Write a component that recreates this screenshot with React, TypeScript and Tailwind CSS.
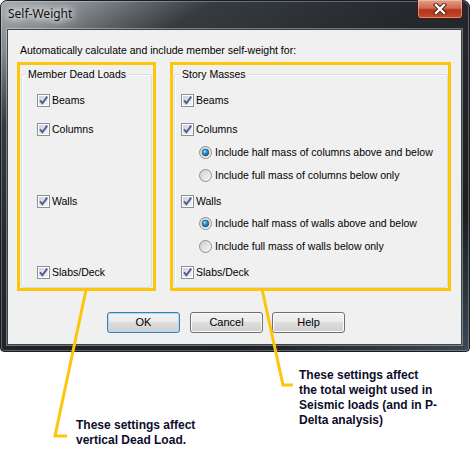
import React from "react";

function CheckBox() {
    return (
        <svg width="13" height="13" viewBox="0 0 13 13" className="shrink-0">
            <defs>
                <linearGradient id="cbFill" x1="0" y1="0" x2="1" y2="1">
                    <stop offset="0" stopColor="#cfd2d6" />
                    <stop offset="1" stopColor="#f5f5f5" />
                </linearGradient>
            </defs>
            <rect x="0.5" y="0.5" width="12" height="12" fill="#ffffff" stroke="#8e8f8f" />
            <rect x="2" y="2" width="9" height="9" fill="url(#cbFill)" />
            <path d="M3 6.3 L5.4 9.2 L10.2 2.6" fill="none" stroke="#4a5c9a" strokeWidth="1.9" />
        </svg>
    );
}

function Radio({ on }: { on?: boolean }) {
    return (
        <svg width="13" height="13" viewBox="0 0 13 13" className="shrink-0">
            <defs>
                <linearGradient id="rbFill" x1="0" y1="0" x2="1" y2="1">
                    <stop offset="0" stopColor="#cdcdcd" />
                    <stop offset="1" stopColor="#fafafa" />
                </linearGradient>
                <radialGradient id="rbDot" cx="0.4" cy="0.35" r="0.7">
                    <stop offset="0" stopColor="#a6e0fb" />
                    <stop offset="0.45" stopColor="#2c8fd0" />
                    <stop offset="1" stopColor="#0c4f86" />
                </radialGradient>
            </defs>
            <circle cx="6.5" cy="6.5" r="6" fill="url(#rbFill)" stroke="#8e8f8f" />
            {on && <circle cx="6.5" cy="6.5" r="3.4" fill="url(#rbDot)" stroke="#1d4f7e" strokeWidth="0.6" />}
        </svg>
    );
}

function CheckRow({ label, className = "" }: { label: string; className?: string }) {
    return (
        <div className={`h-[22px] flex items-center gap-[2px] ${className}`}>
            <CheckBox />
            <span>{label}</span>
        </div>
    );
}

function RadioRow({ label, on, className = "" }: { label: string; on?: boolean; className?: string }) {
    return (
        <div className={`h-[22px] flex items-center gap-[3px] ml-[18px] ${className}`}>
            <Radio on={on} />
            <span>{label}</span>
        </div>
    );
}

function Button({ label, primary }: { label: string; primary?: boolean }) {
    return (
        <button
            type="button"
            className={`w-[73px] h-[21px] rounded-[3px] border text-[11px] leading-none text-black bg-[linear-gradient(180deg,#f2f2f2_0%,#ebebeb_45%,#dddddd_50%,#cfcfcf_100%)] ${
                primary
                    ? "border-[#3c7fb1] shadow-[inset_0_0_0_1px_#a8dbf5]"
                    : "border-[#707070] shadow-[inset_0_0_0_1px_#fbfbfb]"
            }`}
        >
            {label}
        </button>
    );
}

export default function App() {
    return (
        <div className="relative w-[473px] h-[454px] bg-white overflow-hidden font-['Liberation_Sans',Arial,sans-serif] text-black">
            {/* dialog window */}
            <div className="w-[470px] h-[352px] flex flex-col rounded-t-[7px] rounded-b-[4px] border border-[#1a1d20] bg-[linear-gradient(150deg,#a3a8ac_0%,#878c91_8%,#5c6166_14%,#363b3f_20%,#25292d_40%,#1c1f22_78%,#3a4855_100%)] shadow-[inset_0_0_0_1px_rgba(255,255,255,0.28)]">
                <div className="h-[28px] flex items-start justify-between">
                    <span className="mt-[5px] ml-[7px] text-[12px] leading-[16px] text-[#111] font-['Noto_Sans','Open_Sans',sans-serif] [text-shadow:0_0_6px_#ffffff,0_0_10px_#ffffff,0_0_14px_rgba(255,255,255,0.8)]">
                        Self-Weight
                    </span>
                    <div className="-mt-[1px] mr-[6px] w-[46px] h-[19px] flex items-center justify-center rounded-b-[4px] border border-t-0 border-[#4a1a10] bg-[linear-gradient(180deg,#e2a08c_0%,#d06a50_45%,#b8321a_55%,#c64a2c_100%)] shadow-[inset_0_0_0_1px_rgba(255,220,200,0.45)]">
                        <svg width="14" height="12" viewBox="0 0 14 12">
                            <path d="M3 2 L11 10 M11 2 L3 10" stroke="#3b1a12" strokeWidth="4.2" strokeLinecap="square" />
                            <path d="M3 2 L11 10 M11 2 L3 10" stroke="#ffffff" strokeWidth="2.4" strokeLinecap="square" />
                        </svg>
                    </div>
                </div>

                <div className="flex-1 ml-[6px] mr-[7px] mb-[6px] border border-[#3e4347] bg-[#f0f0f0] shadow-[0_0_0_1px_rgba(255,255,255,0.35)] text-[10.5px] leading-[13px] flex flex-col">
                    <p className="pt-[14px] pl-[12px]">Automatically calculate and include member self-weight for:</p>

                    <div className="mt-[5px] pl-[9px] flex gap-[14px]">
                        {/* Member Dead Loads */}
                        <div className="w-[139px] border-[3px] border-[#fec60b] pt-[9px] px-[1px]">
                            <div className="relative h-[214px] border border-[#d5dfe5] rounded-[3px] shadow-[inset_1px_1px_0_#ffffff] pt-[14px] pl-[15px]">
                                <span className="absolute -top-[7px] left-[4px] px-[2px] bg-[#f0f0f0]">Member Dead Loads</span>
                                <CheckRow label="Beams" />
                                <CheckRow label="Columns" className="mt-[7px]" />
                                <CheckRow label="Walls" className="mt-[50px]" />
                                <CheckRow label="Slabs/Deck" className="mt-[49px]" />
                            </div>
                        </div>

                        {/* Story Masses */}
                        <div className="w-[281px] border-[3px] border-[#fec60b] pt-[9px] pl-[1px]">
                            <div className="relative h-[214px] border border-[#d5dfe5] rounded-[3px] shadow-[inset_1px_1px_0_#ffffff] pt-[14px] pl-[6px]">
                                <span className="absolute -top-[7px] left-[5px] px-[2px] bg-[#f0f0f0]">Story Masses</span>
                                <CheckRow label="Beams" />
                                <CheckRow label="Columns" className="mt-[7px]" />
                                <RadioRow on label="Include half mass of columns above and below" className="mt-[1px]" />
                                <RadioRow label="Include full mass of columns below only" className="mt-[1px]" />
                                <CheckRow label="Walls" className="mt-[4px]" />
                                <RadioRow on label="Include half mass of walls above and below" />
                                <RadioRow label="Include full mass of walls below only" className="mt-[1px]" />
                                <CheckRow label="Slabs/Deck" className="mt-[4px]" />
                            </div>
                        </div>
                    </div>

                    <div className="mt-[21px] pl-[99px] flex">
                        <Button label="OK" primary />
                        <div className="ml-[10px]">
                            <Button label="Cancel" />
                        </div>
                        <div className="ml-[9px]">
                            <Button label="Help" />
                        </div>
                    </div>
                </div>
            </div>

            {/* annotations */}
            <div className="flex text-[12px] leading-[15px] font-bold text-[#0d0d2b]">
                <div className="w-[299px] pl-[76px] pt-[66px]">
                    <p>These settings affect</p>
                    <p>vertical Dead Load.</p>
                </div>
                <div className="pt-[16px]">
                    <p>These settings affect</p>
                    <p>the total weight used in</p>
                    <p>Seismic loads (and in P-</p>
                    <p>Delta analysis)</p>
                </div>
            </div>

            <svg className="absolute inset-0 pointer-events-none" width="473" height="454" viewBox="0 0 473 454">
                <polyline points="86,290 55,436 67,436" fill="none" stroke="#fec60b" strokeWidth="3" />
                <polyline points="262,289 283,385 293,385" fill="none" stroke="#fec60b" strokeWidth="3" />
            </svg>
        </div>
    );
}
